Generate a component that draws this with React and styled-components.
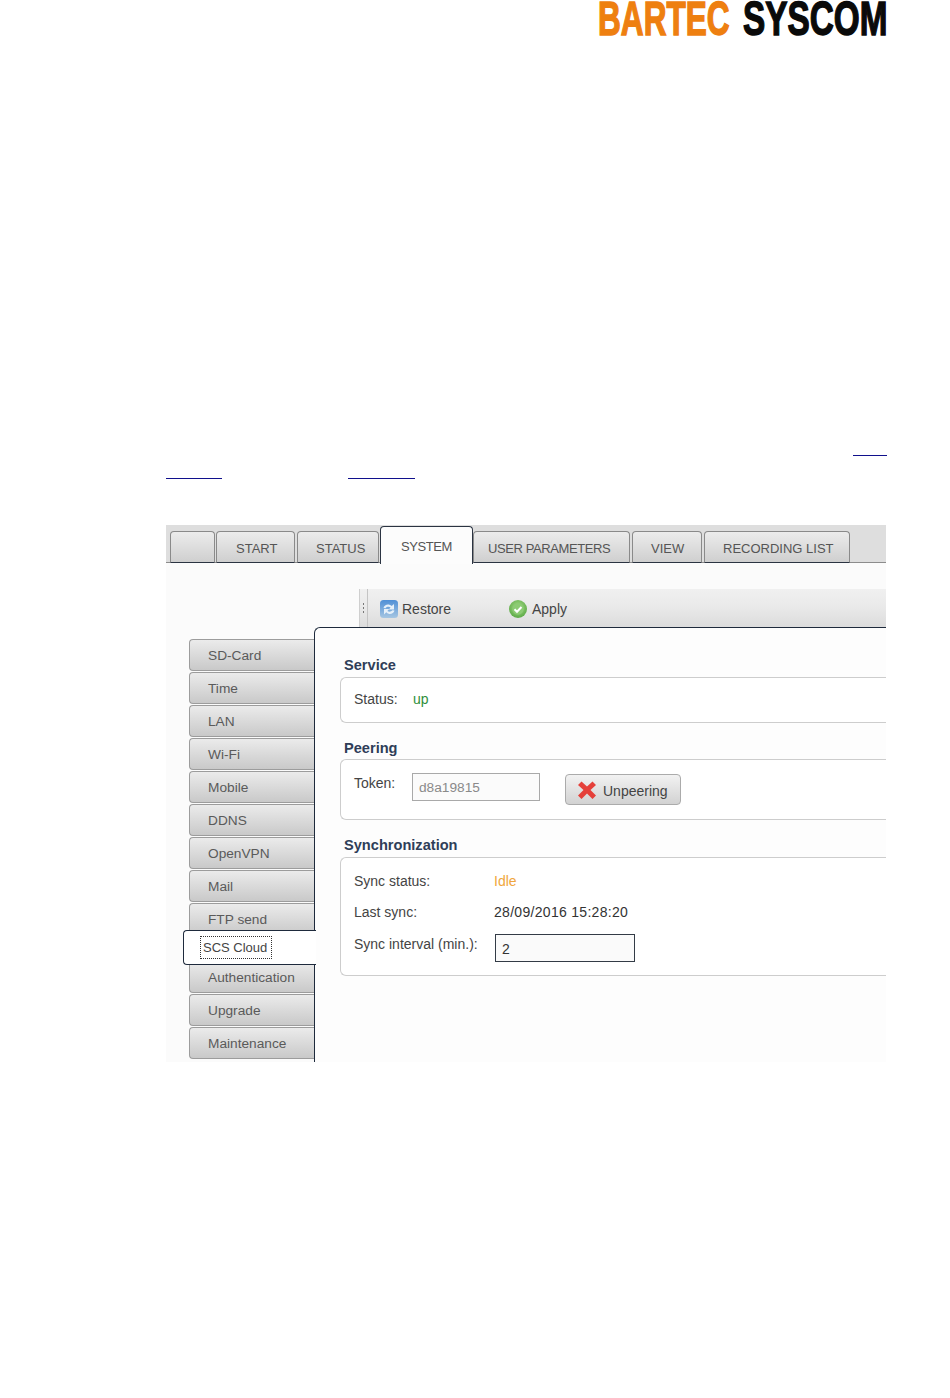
import React from "react";
import styled, { createGlobalStyle } from "styled-components";

const Global = createGlobalStyle`
  html, body { margin: 0; padding: 0; background: #fff; }
  body { font-family: "Liberation Sans", Arial, sans-serif; }
`;

const Page = styled.div`
  width: 950px;
  height: 1398px;
  overflow: hidden;
  background: #fff;
`;
const LogoRow = styled.header`
  height: 38px;
  display: flex;
  justify-content: flex-end;
  gap: 13px;
  padding-right: 63px;
`;
const LogoWord = styled.div`
  width: ${(p) => p.$w}px;
  height: 38px;
  color: ${(p) => p.$c};
  font: 700 49px/37px "Liberation Sans", Arial, sans-serif;
  -webkit-text-stroke: 1.5px ${(p) => p.$c};
  white-space: nowrap;
  span { display: inline-block; transform-origin: 0 50%; transform: scaleX(${(p) => p.$sx}); }
`;
const LinkLineOne = styled.div`
  margin: 417px 63px 0 auto;
  width: 34px;
  border-top: 1px solid #10108c;
`;
const LinkLineTwo = styled.div`
  margin-top: 22px;
  padding-left: 166px;
  display: flex;
  gap: 126px;
`;
const LinkStub = styled.span`
  display: block;
  width: ${(p) => p.$w}px;
  border-top: 1px solid #10108c;
`;
const Shot = styled.section`
  margin: 46px 0 0 166px;
  width: 720px;
  height: 537px;
  background: #fbfbfb;
  overflow: hidden;
  color: #444;
  font-size: 13.7px;
`;
const TabBar = styled.nav`
  height: 38px;
  box-sizing: border-box;
  padding: 2px 0 0 4px;
  display: flex;
  align-items: flex-end;
  background: #dedede;
  border-bottom: 1px solid #8c8c8c;
`;
const Tab = styled.div`
  box-sizing: border-box;
  flex: none;
  width: ${(p) => p.$w}px;
  margin-right: ${(p) => p.$gap}px;
  height: ${(p) => (p.$active ? 38 : 32)}px;
  margin-bottom: ${(p) => (p.$active ? -2 : -1)}px;
  padding: ${(p) => (p.$active ? 12 : 9)}px 0 0 ${(p) => p.$pl}px;
  font-size: 13px;
  letter-spacing: ${(p) => p.$ls}px;
  border: 1px solid ${(p) => (p.$active ? "#2b3442" : "#8a8a8a")};
  border-bottom: ${(p) => (p.$active ? "none" : "1px solid #2b3442")};
  border-radius: 4px 4px 0 0;
  background: ${(p) => (p.$active ? "#fcfcfc" : "linear-gradient(#ececec, #cfcfcf)")};
  color: #555;
  line-height: 16px;
  white-space: nowrap;
  position: relative;
  z-index: ${(p) => (p.$active ? 1 : 0)};
`;
const Body = styled.div`
  display: flex;
  height: 499px;
`;
const Sidebar = styled.aside`
  flex: none;
  width: 148px;
  box-sizing: border-box;
  padding: 76px 0 0 23px;
  display: flex;
  flex-direction: column;
`;
const NavItem = styled.div`
  box-sizing: border-box;
  height: 32px;
  margin-bottom: 1px;
  padding-left: 18px;
  line-height: 32px;
  color: #5a5a5a;
  background: linear-gradient(#ebebeb, #c9c9c9);
  border: 1px solid #9c9c9c;
  border-right: none;
  border-radius: 4px 0 0 4px;
  white-space: nowrap;
`;
const NavAfterSelected = styled(NavItem)`
  margin-top: -4px;
`;
const NavSelected = styled.div`
  position: relative;
  z-index: 2;
  box-sizing: border-box;
  height: 35px;
  width: 133px;
  margin: -6px 0 0 -6px;
  padding: 6px 0 0 17px;
  background: #fff;
  border: 1px solid #1e2a3c;
  border-right: none;
  border-radius: 4px 0 0 4px;
  color: #444;
  font-size: 13px;
`;
const FocusLabel = styled.span`
  display: inline-block;
  height: 21px;
  width: 70px;
  line-height: 21px;
  box-sizing: border-box;
  outline: 1px dotted #333;
  padding-left: 2px;
`;
const Main = styled.div`
  flex: 1;
  min-width: 0;
  display: flex;
  flex-direction: column;
`;
const Toolbar = styled.div`
  height: 38px;
  margin: 26px 0 0 45px;
  box-sizing: border-box;
  display: flex;
  align-items: center;
  background: linear-gradient(#f0f0f0, #eaeaea 45%, #dcdcdc);
  color: #444;
  border-left: 1px solid #cfcfcf;
  font-size: 14px;
`;
const Grip = styled.div`
  width: 7px;
  height: 100%;
  margin-right: 12px;
  border-right: 1px solid #c4c4c4;
  display: flex;
  align-items: center;
  justify-content: center;
  &::before {
    content: "";
    width: 1px;
    height: 11px;
    background: repeating-linear-gradient(#777 0 2px, transparent 2px 4px);
  }
`;
const ToolButton = styled.div`
  width: ${(p) => p.$w}px;
  display: flex;
  align-items: center;
  gap: ${(p) => p.$gap}px;
  line-height: 18px;
  padding-top: 1px;
  svg { flex: none; }
`;
const Content = styled.main`
  flex: 1;
  box-sizing: border-box;
  background: #fdfdfd;
  border-left: 1px solid #1e2a3c;
  border-top: 1px solid #1e2a3c;
  border-top-left-radius: 6px;
  padding: 28px 0 0 25px;
  display: flex;
  flex-direction: column;
  position: relative;
  z-index: 1;
  font-size: 14px;
`;
const Heading = styled.h3`
  margin: ${(p) => p.$top}px 0 0 4px;
  height: 21px;
  font-size: 14.6px;
  line-height: 18px;
  font-weight: 700;
  color: #2f3e58;
`;
const Group = styled.div`
  box-sizing: border-box;
  height: ${(p) => p.$h}px;
  margin-top: ${(p) => p.$mt ?? 0}px;
  padding-left: 13px;
  border: 1px solid #cdcdcd;
  border-right: none;
  border-radius: 6px 0 0 6px;
  background: #fff;
  position: relative;
`;
const StatusRow = styled.div`
  display: flex;
  padding-top: 12px;
  line-height: 18px;
`;
const Label = styled.span`
  width: ${(p) => p.$w}px;
  flex: none;
  color: #444;
  line-height: 18px;
  padding-top: ${(p) => p.$pt || 0}px;
`;
const Value = styled.span`
  color: ${(p) => p.$c || "#333"};
  letter-spacing: ${(p) => p.$ls || 0}px;
`;
const PeerRow = styled.div`
  display: flex;
  align-items: flex-start;
  padding-top: 13px;
`;
const TokenInput = styled.div`
  box-sizing: border-box;
  width: 128px;
  height: 28px;
  margin-right: 25px;
  padding-left: 6px;
  border: 1px solid #a9a9a9;
  background: #fbfbfb;
  color: #8a8a8a;
  line-height: 28px;
  font-size: 13.7px;
`;
const UnpeerButton = styled.div`
  box-sizing: border-box;
  width: 116px;
  height: 31px;
  margin-top: 1px;
  padding-left: 12px;
  display: flex;
  align-items: center;
  gap: 7px;
  border: 1px solid #ababab;
  border-radius: 4px;
  background: linear-gradient(#f2f2f2, #d2d2d2);
  color: #444;
`;
const ButtonText = styled.span`
  padding-top: 3px;
`;
const SyncRow = styled.div`
  display: flex;
  height: ${(p) => p.$h}px;
  line-height: 18px;
  padding-top: ${(p) => p.$pt}px;
  box-sizing: border-box;
`;
const IntervalInput = styled.div`
  box-sizing: border-box;
  width: 140px;
  height: 28px;
  padding-left: 6px;
  border: 1px solid #333b46;
  background: #fafafa;
  line-height: 29px;
  color: #333;
`;

const RestoreIcon = () => (
  <svg width="18" height="18" viewBox="0 0 18 18">
    <defs>
      <linearGradient id="rb" x1="0" y1="0" x2="0" y2="1">
        <stop offset="0" stopColor="#4f8fd6" />
        <stop offset="1" stopColor="#a6c6e2" />
      </linearGradient>
    </defs>
    <rect x="0" y="0" width="18" height="18" rx="3.500" fill="url(#rb)" />
    <path d="M3.500 8c.6-2.600 3.300-4 5.900-3.300.9.200 1.700.7 2.300 1.400L14 4v5.400H8.800l1.800-1.900c-1.500-1.200-3.900-.9-5 .7z" fill="#e6f0f9" />
    <path d="M14.500 10.400c-.6 2.600-3.300 4-5.900 3.300-.9-.2-1.700-.7-2.300-1.400L4 14.400V9h5.200l-1.800 1.900c1.500 1.200 3.900.9 5-.7z" fill="#e6f0f9" />
  </svg>
);
const ApplyIcon = () => (
  <svg width="18" height="18" viewBox="0 0 18 18">
    <defs>
      <radialGradient id="ag" cx="0.5" cy="0.4" r="0.65">
        <stop offset="0" stopColor="#a8dc8a" />
        <stop offset="1" stopColor="#55a640" />
      </radialGradient>
    </defs>
    <circle cx="9" cy="9" r="9" fill="url(#ag)" />
    <circle cx="9" cy="9" r="5.800" fill="#8ccb74" />
    <path d="M5.500 9.200l2.500 2.500 4.500-4.700" fill="none" stroke="#fff" strokeWidth="2" />
  </svg>
);
const CrossIcon = () => (
  <svg width="18" height="18" viewBox="0 0 18 18">
    <path d="M3.500 0.500L9 5.500l5.500-5L18 4 12.500 9l5.500 5.500-3.500 3.500L9 12.500 3.500 18 0 14.500 5.500 9 0 4z" fill="#e5403a" />
  </svg>
);

const tabs = [
  { label: "", w: 45, gap: 1, pl: 0, ls: 0 },
  { label: "START", w: 79, gap: 2, pl: 19, ls: 0 },
  { label: "STATUS", w: 82, gap: 1, pl: 18, ls: 0 },
  { label: "SYSTEM", w: 93, gap: 0, pl: 20, ls: -0.4, active: true },
  { label: "USER PARAMETERS", w: 157, gap: 2, pl: 14, ls: -0.4 },
  { label: "VIEW", w: 70, gap: 2, pl: 18, ls: 0 },
  { label: "RECORDING LIST", w: 146, gap: 0, pl: 18, ls: 0 },
];
const navTop = ["SD-Card", "Time", "LAN", "Wi-Fi", "Mobile", "DDNS", "OpenVPN", "Mail", "FTP send"];

export default function App() {
  return (
    <Page>
      <Global />
      <LogoRow>
        <LogoWord $w={132} $c="#ee7f10" $sx={0.645}><span>BARTEC</span></LogoWord>
        <LogoWord $w={144} $c="#0a0a0a" $sx={0.68}><span>SYSCOM</span></LogoWord>
      </LogoRow>
      <LinkLineOne />
      <LinkLineTwo>
        <LinkStub $w={56} />
        <LinkStub $w={67} />
      </LinkLineTwo>
      <Shot>
        <TabBar>
          {tabs.map((t) => (
            <Tab key={t.label || "blank"} $w={t.w} $gap={t.gap} $pl={t.pl} $ls={t.ls} $active={t.active}>{t.label}</Tab>
          ))}
        </TabBar>
        <Body>
          <Sidebar>
            {navTop.map((n) => <NavItem key={n}>{n}</NavItem>)}
            <NavSelected><FocusLabel>SCS Cloud</FocusLabel></NavSelected>
            <NavAfterSelected>Authentication</NavAfterSelected>
            <NavItem>Upgrade</NavItem>
            <NavItem>Maintenance</NavItem>
          </Sidebar>
          <Main>
            <Toolbar>
              <Grip />
              <ToolButton $w={129} $gap={4}><RestoreIcon />Restore</ToolButton>
              <ToolButton $w={80} $gap={5}><ApplyIcon />Apply</ToolButton>
            </Toolbar>
            <Content>
              <Heading $top={0}>Service</Heading>
              <Group $h={46}>
                <StatusRow>
                  <Label $w={59}>Status:</Label>
                  <Value $c="#2f8f3a">up</Value>
                </StatusRow>
              </Group>
              <Heading $top={16}>Peering</Heading>
              <Group $h={61} $mt={-1}>
                <PeerRow>
                  <Label $w={58} $pt={1}>Token:</Label>
                  <TokenInput>d8a19815</TokenInput>
                  <UnpeerButton><CrossIcon /><ButtonText>Unpeering</ButtonText></UnpeerButton>
                </PeerRow>
              </Group>
              <Heading $top={16}>Synchronization</Heading>
              <Group $h={119}>
                <SyncRow $h={45} $pt={14}>
                  <Label $w={140}>Sync status:</Label>
                  <Value $c="#f0a63c">Idle</Value>
                </SyncRow>
                <SyncRow $h={31} $pt={0}>
                  <Label $w={140}>Last sync:</Label>
                  <Value $ls={0.3}>28/09/2016 15:28:20</Value>
                </SyncRow>
                <SyncRow $h={28} $pt={0}>
                  <Label $w={141} $pt={1}>Sync interval (min.):</Label>
                  <IntervalInput>2</IntervalInput>
                </SyncRow>
              </Group>
            </Content>
          </Main>
        </Body>
      </Shot>
    </Page>
  );
}
